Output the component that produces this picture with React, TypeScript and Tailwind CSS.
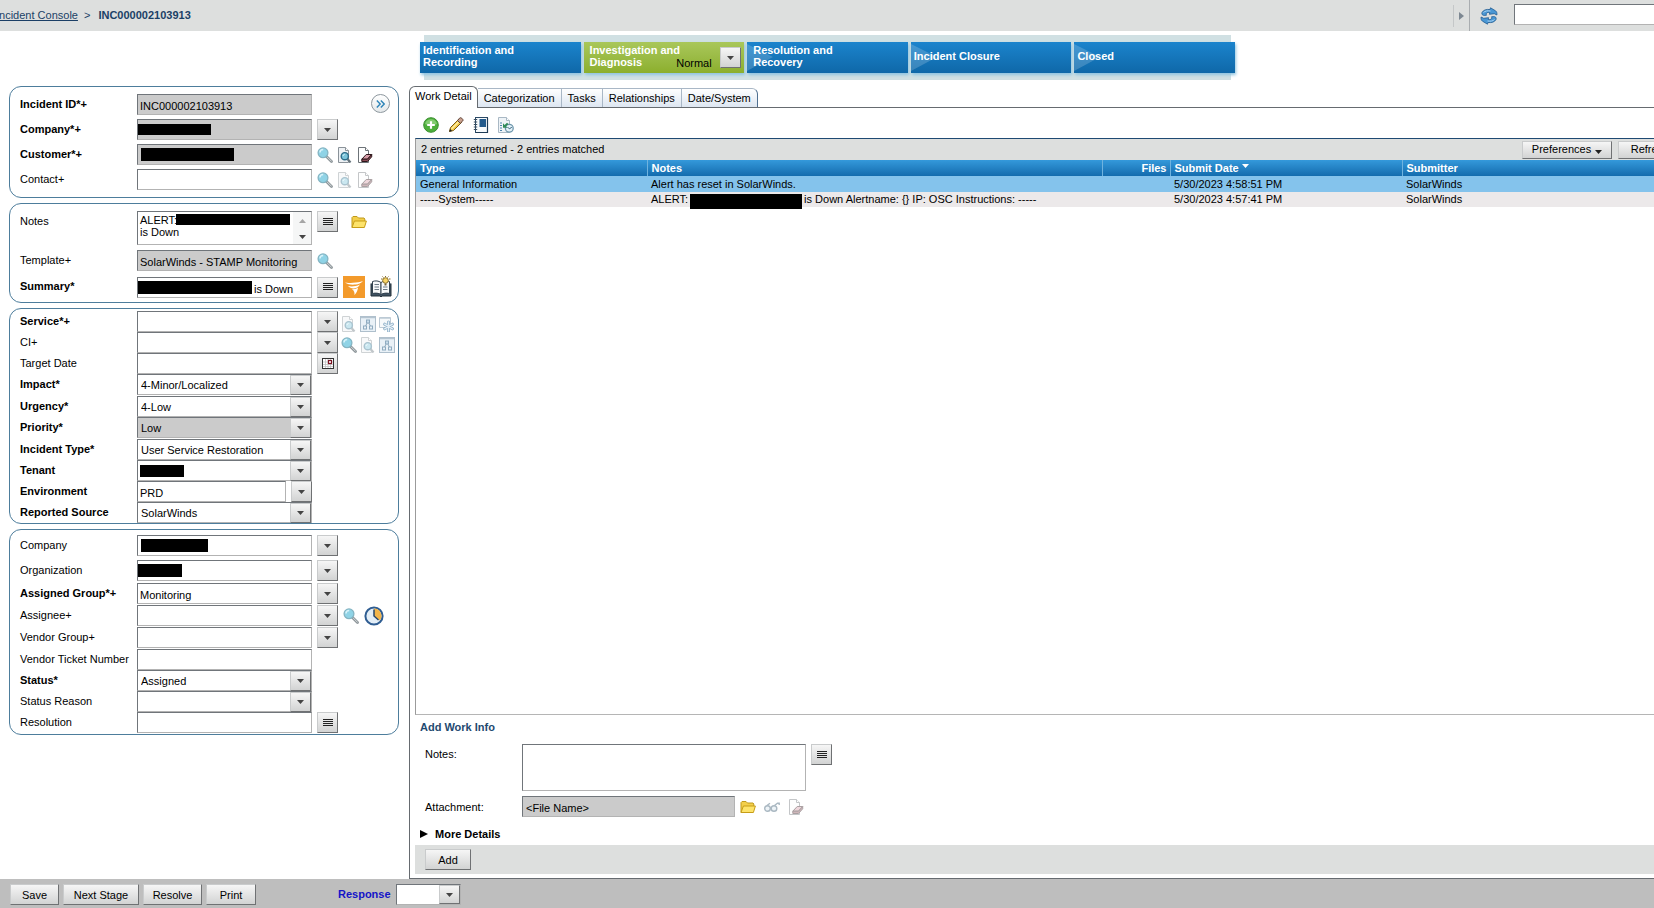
import { useId, type ReactNode } from 'react';

const raised =
  'border border-t-[#c9cbcc] border-l-[#c9cbcc] border-r-[#6f7173] border-b-[#6f7173] bg-gradient-to-b from-[#f6f6f6] to-[#d2d3d3]';
const sunken = 'border border-t-[#70757a] border-l-[#70757a] border-r-[#b3b3b3] border-b-[#b3b3b3]';

/* ---------- icons ---------- */

function Caret({ className = 'text-[#444]' }: { className?: string }) {
  return (
    <svg width="7" height="4" viewBox="0 0 8 5" preserveAspectRatio="none" className={className} aria-hidden="true">
      <path d="M0 0h8L4 5z" fill="currentColor" />
    </svg>
  );
}

function Magnifier() {
  return (
    <svg width="16" height="16" viewBox="0 0 16 16" aria-hidden="true">
      <path d="M9.5 9.5l5 5" stroke="#8d9599" strokeWidth="2.8" strokeLinecap="round" />
      <path d="M10 9.8l4.4 4.4" stroke="#d5dadc" strokeWidth="1" strokeLinecap="round" />
      <circle cx="6" cy="5.8" r="4.9" fill="#8fd3e6" stroke="#84b4c2" strokeWidth="1.3" />
      <path d="M3 5.6c0-1.9 1.3-3 3.2-3" stroke="#d8f3fa" strokeWidth="1.5" fill="none" />
    </svg>
  );
}

function DocSearch({ faded = false }: { faded?: boolean }) {
  return (
    <svg width="16" height="16" viewBox="0 0 16 16" className={faded ? 'opacity-40' : ''} aria-hidden="true">
      <path d="M1.5.5h7l3 3v12h-10z" fill="#eef1f4" stroke="#8a9299" />
      <path d="M8.500.5v3h3" fill="#fff" stroke="#8a9299" />
      <path d="M10.500 12l3 3.500" stroke="#66747c" strokeWidth="2.200" />
      <circle cx="7.800" cy="9.200" r="3.600" fill="#7cc4da" stroke="#2c6c89" strokeWidth="1.400" />
      <path d="M6 9c.1-1 .7-1.600 1.700-1.700" stroke="#d8f3fa" fill="none" />
    </svg>
  );
}

function DocErase({ faded = false }: { faded?: boolean }) {
  return (
    <svg width="16" height="16" viewBox="0 0 16 16" className={faded ? 'opacity-40' : ''} aria-hidden="true">
      <path d="M1.500.5h7l3 3v12h-10z" fill="#fdfdfd" stroke="#6d7378" />
      <path d="M8.500.5v3h3" fill="#fff" stroke="#6d7378" />
      <path d="M4.800 12.200l4.400-4.700h5.500l-4.200 4.700z" fill="#d59aa6" stroke="#2d1519" strokeLinejoin="round" />
      <path d="M4.800 12.200v2.300h5.700l4.200-4.700V7.500l-4.200 4.700z" fill="#8b4a55" stroke="#2d1519" strokeLinejoin="round" />
    </svg>
  );
}

function Folder() {
  return (
    <svg width="16" height="14" viewBox="0 0 16 14" aria-hidden="true">
      <path d="M1 12.500V2.500l1-1h4l1.500 1.500h5.500l.8 1v2" fill="#f3cf4b" stroke="#c09a1c" strokeLinejoin="round" />
      <path d="M1 12.500l2.400-6.500h12l-2 6.500z" fill="#fde36b" stroke="#c79d17" strokeLinejoin="round" />
    </svg>
  );
}

function Hierarchy() {
  return (
    <svg width="16" height="16" viewBox="0 0 16 16" aria-hidden="true">
      <rect x=".5" y=".5" width="15" height="15" fill="#e9f1f7" stroke="#aebfcc" />
      <path d="M1 1.500h14" stroke="#b4c4d0" strokeWidth="1.500" />
      <path d="M7.500 6.500L5.500 10v1M8.500 6.500l2 3.500v1" stroke="#8fabc0" fill="none" />
      <rect x="6.500" y="4" width="3" height="3" fill="#c8dcea" stroke="#8fabc0" />
      <rect x="3.500" y="10" width="3" height="3" fill="#e9f1f7" stroke="#8fabc0" />
      <rect x="9.500" y="10" width="3" height="3" fill="#e9f1f7" stroke="#8fabc0" />
    </svg>
  );
}

function Impact() {
  return (
    <svg width="16" height="16" viewBox="0 0 16 16" aria-hidden="true">
      <path d="M.5 1.500h11v10H.5z" fill="#f6f9fb" stroke="#bccad5" />
      <path d="M1 2h10" stroke="#bccad5" strokeWidth="1.500" />
      <g stroke="#8fb0c8" strokeWidth="3" strokeLinecap="round">
        <path d="M9.500 6v9M5.700 8.200l7.700 4.600M5.700 12.800l7.700-4.600" />
      </g>
      <g stroke="#e4eff7" strokeWidth="1.400" strokeLinecap="round">
        <path d="M9.500 6v9M5.700 8.200l7.700 4.600M5.700 12.800l7.700-4.600" />
      </g>
    </svg>
  );
}

function SolarFlare() {
  return (
    <svg width="22" height="22" viewBox="0 0 22 22" aria-hidden="true">
      <rect width="22" height="22" fill="#f39a2b" />
      <path d="M2 6.500c3 .8 5 .3 8 .2 4 0 7-.8 10-1.700-2 2.200-4.500 3.500-7.500 3.600-4 .2-7.500.2-10.500-2.100z" fill="#fff" />
      <path d="M5 10c3 .8 7 .8 12-1.500-1.500 2.600-3.800 3.800-6 3.900-2.600.1-4.500-.8-6-2.400z" fill="#fff" />
      <path d="M9 13c2 .4 4 .1 6-1.200-.3 2.800-1.600 5.400-3.600 7.200.5-2.500-.4-4.500-2.400-6z" fill="#fff" />
    </svg>
  );
}

function Book() {
  return (
    <svg width="22" height="22" viewBox="0 0 22 22" aria-hidden="true">
      <path d="M1 7.500v12.500h9l1 1 1-1h9V7.500" fill="#3f5263" stroke="#23303b" />
      <path d="M2.500 5.500c3-1 6-.8 8.500 1v12c-2.500-1.500-5.500-1.700-8.500-1z" fill="#f7f9fa" stroke="#33424f" />
      <path d="M19.500 5.500c-3-1-6-.8-8.500 1v12c2.500-1.500 5.500-1.700 8.500-1z" fill="#f7f9fa" stroke="#33424f" />
      <path d="M4.500 8.500h4.500M4.500 11h4.500M4.500 13.500h4.500M13 11h4.500M13 13.500h4.500" stroke="#6d7b86" />
      <path d="M11 3h1.500M19 3h1.500M12.500.5l1 1M18.500.5l-1 1M15.500 0v1" stroke="#8a6f28" />
      <circle cx="15.500" cy="4.500" r="2.800" fill="#f8d465" stroke="#8a6f28" />
      <path d="M14.500 7.500h2v2h-2z" fill="#77633a" />
    </svg>
  );
}

function Clock() {
  return (
    <svg width="20" height="20" viewBox="0 0 20 20" aria-hidden="true">
      <circle cx="10" cy="10" r="8.600" fill="#e3eef7" stroke="#2f5d92" strokeWidth="2" />
      <path d="M10 10V2.600a7.400 7.400 0 0 1 5.800 12z" fill="#f3b54a" />
      <path d="M10 3.500V10l4.500 4" stroke="#27466b" strokeWidth="1.500" fill="none" />
    </svg>
  );
}

function CalendarIcon() {
  return (
    <svg width="12" height="11" viewBox="0 0 12 11" aria-hidden="true">
      <rect x=".5" y=".5" width="11" height="10" fill="#fff" stroke="#333" />
      <path d="M1 4h10M1 6.500h10M1 8.500h10M3.500 1v9M6 1v9M8.500 1v9" stroke="#b9b9b9" strokeWidth=".7" />
      <rect x="6.500" y="2.500" width="3" height="3" fill="#fff" stroke="#7c1020" strokeWidth="1.200" />
    </svg>
  );
}

function Lines() {
  return (
    <svg width="10" height="8" viewBox="0 0 10 8" aria-hidden="true">
      <path d="M0 .5h10M0 2.500h10M0 4.500h10M0 6.500h10" stroke="#222" />
    </svg>
  );
}

function AddIcon() {
  return (
    <svg width="16" height="16" viewBox="0 0 16 16" aria-hidden="true">
      <circle cx="8" cy="8" r="7.300" fill="#4cae3a" stroke="#3a8f2f" />
      <path d="M2 7a6.200 6.200 0 0 1 12 0c-3 1.500-9 1.500-12 0z" fill="#82cc70" />
      <path d="M8 4.200v7.600M4.200 8h7.600" stroke="#fff" strokeWidth="2.200" />
    </svg>
  );
}

function Pencil() {
  return (
    <svg width="16" height="16" viewBox="0 0 16 16" aria-hidden="true">
      <path d="M1.500 14.500l1-4 8-8 3 3-8 8z" fill="#f4c948" stroke="#7a5a14" strokeLinejoin="round" />
      <path d="M3.500 12l7.500-7.500" stroke="#fff0a8" strokeWidth="1.200" />
      <path d="M9.500 3.500l2-2.300c.8-.8 1.500-.6 2.300.1l.7.700c.7.800.7 1.500 0 2.200l-2.200 2.100z" fill="#c9a08e" stroke="#5f4337" />
      <path d="M1.200 14.800l.9-2.900 2 2z" fill="#222" />
    </svg>
  );
}

function Notebook() {
  return (
    <svg width="16" height="16" viewBox="0 0 16 16" aria-hidden="true">
      <rect x="2.500" y=".5" width="12" height="15" fill="#f7fafc" stroke="#2b4a66" />
      <path d="M14.500 1v14.500H3" stroke="#1f3b55" fill="none" strokeWidth="1.200" />
      <rect x="6.500" y="2" width="6.500" height="8" fill="#235a8c" />
      <path d="M.8 2.500h3.400M.8 5h3.400M.8 7.500h3.400M.8 10h3.400M.8 12.500h3.400" stroke="#3a4e60" strokeWidth="1.200" />
    </svg>
  );
}

function Report() {
  return (
    <svg width="16" height="16" viewBox="0 0 16 16" aria-hidden="true">
      <path d="M.5.5h8l3 3v12H.5z" fill="#eef3f7" stroke="#a9b8c4" />
      <path d="M8.500.5v3h3" fill="#fff" stroke="#a9b8c4" />
      <path d="M2 6h2M2 8.500h2M2 11h2M2 13.500h2" stroke="#4c83ab" strokeWidth="1.200" />
      <circle cx="11.300" cy="11.300" r="3.900" fill="#e4f1f8" stroke="#6c95ab" strokeWidth="1.300" />
      <path d="M9.500 10l1.800 1.800 2.500-1.500" stroke="#35617c" fill="none" />
      <path d="M5 6.200v4.600h4.600L8 9.300 10.500 7 9 5.700 6.600 7.900z" fill="#2f8a58" />
    </svg>
  );
}

function Glasses() {
  return (
    <svg width="16" height="16" viewBox="0 0 16 16" aria-hidden="true">
      <g fill="#edf3f7" stroke="#aab8c2" strokeWidth="1.400">
        <circle cx="3.500" cy="9.500" r="2.800" />
        <circle cx="10" cy="9.500" r="2.800" />
        <path d="M3 6.500l3-2.300M10.500 6.500l3-2.300h1.700v1.800M6.200 9h1.200" fill="none" />
      </g>
    </svg>
  );
}

function RefreshIcon() {
  return (
    <svg width="18" height="18" viewBox="0 0 18 18" aria-hidden="true">
      <g fill="#4a97d4" stroke="#1f5a91" strokeWidth=".8" strokeLinejoin="round">
        <path d="M2 5.500C3.500 2.800 6.500 2 10 2.600L10.500.800 15.500 3.800c1.300 1 1.600 2.200 1.400 4.200l-2.600-1.300-4.900.6.400-1.800C7.500 5 5.500 6.200 6.500 8.200 3.500 9 1.200 8 2 5.500z" />
        <path d="M16 12.500c-1.500 2.700-4.500 3.500-8 2.900l-.5 1.800-5-3C1.200 13.200.900 12 1.100 10l2.600 1.300 4.900-.6-.4 1.800c2.300.5 4.300-.7 3.300-2.700 3-.8 5.300.2 4.500 2.700z" />
      </g>
      <path d="M3.500 5.500C5 3.900 7.500 3.600 10.500 4M14.500 12.500c-1.500 1.600-4 1.900-7 1.500" stroke="#a9d3f2" fill="none" />
    </svg>
  );
}

/* ---------- form parts ---------- */

function ToolButton({ label, children }: { label: string; children: ReactNode }) {
  return (
    <button type="button" aria-label={label} className={`flex h-[21px] w-[21px] shrink-0 items-center justify-center ${raised}`}>
      {children}
    </button>
  );
}

function IconButton({ label, children }: { label: string; children: ReactNode }) {
  return (
    <button type="button" aria-label={label} className="flex shrink-0 items-center justify-center">
      {children}
    </button>
  );
}

function MenuButton({ label }: { label: string }) {
  return (
    <ToolButton label={label}>
      <Caret />
    </ToolButton>
  );
}

function Row({ label, bold, id, tall, children }: { label: string; bold?: boolean; id: string; tall?: boolean; children: ReactNode }) {
  return (
    <div className={`flex ${tall ? 'items-start' : 'items-center'}`}>
      <label htmlFor={id} className={`w-[117px] shrink-0 whitespace-nowrap leading-4 ${bold ? 'font-bold' : ''} ${tall ? 'pt-[2px]' : 'pb-[2px]'}`}>
        {label}
      </label>
      <div className="flex items-center gap-[5px]">{children}</div>
    </div>
  );
}

type FieldProps = {
  label: string;
  bold?: boolean;
  value?: string;
  readOnly?: boolean;
  mask?: ReactNode;
  width?: string;
  children?: ReactNode;
};

function TextRow({ label, bold, value = '', readOnly, mask, width = 'w-[175px]', children }: FieldProps) {
  const id = useId();
  return (
    <Row label={label} bold={bold} id={id}>
      <span className={`flex h-[21px] items-center ${width} ${sunken} ${readOnly ? 'bg-[#cbcbcb]' : 'bg-white'}`}>
        {mask}
        <input id={id} type="text" defaultValue={value} readOnly={readOnly} className="h-full w-full min-w-0 flex-1 bg-transparent pt-[3px] pl-[2px] outline-none" />
      </span>
      {children}
    </Row>
  );
}

function SelectRow({ label, bold, value = '', readOnly, mask }: FieldProps) {
  const id = useId();
  return (
    <Row label={label} bold={bold} id={id}>
      <span className={`flex h-[21px] w-[175px] items-center ${sunken} ${readOnly ? 'bg-[#cbcbcb]' : 'bg-white'}`}>
        {mask}
        <select id={id} className="h-full min-w-0 flex-1 appearance-none bg-transparent pt-[1px] pl-[3px] outline-none">
          <option>{value}</option>
        </select>
        <span className={`flex h-[20px] w-[21px] items-center justify-center ${raised}`}>
          <Caret />
        </span>
      </span>
    </Row>
  );
}

function Panel({ className, children }: { className: string; children: ReactNode }) {
  return <section className={`flex flex-col rounded-xl border border-[#4d7d9c] pl-[10px] ${className}`}>{children}</section>;
}

function ActionButton({ children, className }: { children: ReactNode; className: string }) {
  return (
    <button type="button" className={`flex h-[21px] items-center justify-center whitespace-nowrap pt-px ${raised} ${className}`}>
      {children}
    </button>
  );
}

/* ---------- left side ---------- */

function IncidentForm() {
  const notesId = useId();
  return (
    <div className="flex w-[409px] shrink-0 flex-col gap-[5px] pl-[9px] pr-[10px]">
      <Panel className="gap-1 py-[7px]">
        <div className="flex items-start justify-between pr-2">
          <TextRow label="Incident ID*+" bold value="INC000002103913" readOnly />
          <button
            type="button"
            aria-label="Expand"
            className="flex h-[19px] w-[19px] items-center justify-center rounded-full border border-[#8d979e] bg-gradient-to-b from-white to-[#e4e8ea]"
          >
            <svg width="9" height="8" viewBox="0 0 9 8" aria-hidden="true">
              <path d="M.8.500L4.200 4 .8 7.500M4.800.500L8.200 4 4.800 7.500" fill="none" stroke="#2d84b8" strokeWidth="1.400" />
            </svg>
          </button>
        </div>
        <TextRow label="Company*+" bold readOnly mask={<span className="h-[11px] w-[73px] bg-black" />}>
          <MenuButton label="Company menu" />
        </TextRow>
        <TextRow label="Customer*+" bold readOnly mask={<span className="ml-[3px] h-[13px] w-[93px] bg-black" />}>
          <span className="flex gap-1">
            <IconButton label="Search customer"><Magnifier /></IconButton>
            <IconButton label="View customer"><DocSearch /></IconButton>
            <IconButton label="Clear customer"><DocErase /></IconButton>
          </span>
        </TextRow>
        <TextRow label="Contact+">
          <span className="flex gap-1">
            <IconButton label="Search contact"><Magnifier /></IconButton>
            <IconButton label="View contact"><DocSearch faded /></IconButton>
            <IconButton label="Clear contact"><DocErase faded /></IconButton>
          </span>
        </TextRow>
      </Panel>

      <Panel className="gap-[5px] pt-[7px] pb-1">
        <Row label="Notes" id={notesId} tall>
          <div className={`relative flex h-[34px] w-[175px] bg-white ${sunken}`}>
            <textarea id={notesId} defaultValue={'ALERT:\nis Down'} className="min-w-0 flex-1 resize-none overflow-hidden pt-[2px] pl-[2px] leading-3 outline-none" />
            <span className="absolute top-[2px] left-[38px] h-[11px] w-[114px] bg-black" />
            <span className="flex w-[18px] flex-col items-center justify-between bg-[#f5f6f6] pt-[7px] pb-[5px]">
              <Caret className="rotate-180 text-[#a5a5a5]" />
              <Caret />
            </span>
          </div>
          <div className="flex items-center gap-[13px] self-start">
            <ToolButton label="Expand notes"><Lines /></ToolButton>
            <IconButton label="Open notes folder"><Folder /></IconButton>
          </div>
        </Row>
        <TextRow label="Template+" value="SolarWinds - STAMP Monitoring" readOnly>
          <IconButton label="Search template"><Magnifier /></IconButton>
        </TextRow>
        <TextRow label="Summary*" bold value="is Down" mask={<span className="h-[13px] w-[114px] bg-black" />}>
          <ToolButton label="Expand summary"><Lines /></ToolButton>
          <IconButton label="SolarWinds"><SolarFlare /></IconButton>
          <IconButton label="Knowledge search"><Book /></IconButton>
        </TextRow>
      </Panel>

      <Panel className="pt-[2px]">
        <div className="flex flex-col">
          <TextRow label="Service*+" bold>
            <MenuButton label="Service menu" />
            <span className="-ml-[2px] flex gap-[3px] pt-[5px]">
              <IconButton label="View service"><DocSearch faded /></IconButton>
              <IconButton label="Service hierarchy"><Hierarchy /></IconButton>
              <IconButton label="Service impact"><Impact /></IconButton>
            </span>
          </TextRow>
          <TextRow label="CI+">
            <MenuButton label="CI menu" />
            <span className="-ml-[2px] flex gap-[3px] pt-[5px]">
              <IconButton label="Search CI"><Magnifier /></IconButton>
              <IconButton label="View CI"><DocSearch faded /></IconButton>
              <IconButton label="CI hierarchy"><Hierarchy /></IconButton>
            </span>
          </TextRow>
          <TextRow label="Target Date">
            <ToolButton label="Pick date"><CalendarIcon /></ToolButton>
          </TextRow>
        </div>
        <div className="flex flex-col gap-px">
          <SelectRow label="Impact*" bold value="4-Minor/Localized" />
          <SelectRow label="Urgency*" bold value="4-Low" />
        </div>
        <div className="flex flex-col gap-px">
          <SelectRow label="Priority*" bold value="Low" readOnly />
          <SelectRow label="Incident Type*" bold value="User Service Restoration" />
        </div>
        <div className="flex flex-col">
          <SelectRow label="Tenant" bold mask={<span className="ml-[2px] h-3 w-[44px] bg-black" />} />
          <TextRow label="Environment" bold value="PRD" width="w-[149px]">
            <MenuButton label="Environment menu" />
          </TextRow>
          <SelectRow label="Reported Source" bold value="SolarWinds" />
        </div>
      </Panel>

      <Panel className="gap-[2px] pt-[5px] pb-px">
        <div className="flex flex-col gap-1">
          <TextRow label="Company" mask={<span className="ml-[3px] h-[13px] w-[67px] bg-black" />}>
            <MenuButton label="Assigned company menu" />
          </TextRow>
          <TextRow label="Organization" mask={<span className="h-[13px] w-[44px] bg-black" />}>
            <MenuButton label="Organization menu" />
          </TextRow>
        </div>
        <div className="flex flex-col">
          <div className="flex flex-col gap-px">
            <TextRow label="Assigned Group*+" bold value="Monitoring">
              <MenuButton label="Assigned group menu" />
            </TextRow>
            <TextRow label="Assignee+">
              <MenuButton label="Assignee menu" />
              <IconButton label="Search assignee"><Magnifier /></IconButton>
              <IconButton label="Assignee schedule"><Clock /></IconButton>
            </TextRow>
            <TextRow label="Vendor Group+">
              <MenuButton label="Vendor group menu" />
            </TextRow>
            <TextRow label="Vendor Ticket Number" />
          </div>
          <SelectRow label="Status*" bold value="Assigned" />
          <SelectRow label="Status Reason" />
          <TextRow label="Resolution">
            <ToolButton label="Expand resolution"><Lines /></ToolButton>
          </TextRow>
        </div>
      </Panel>
    </div>
  );
}

/* ---------- process flow ---------- */

const stages = [
  { name: 'Identification and Recording', current: false, arrow: false, short: false },
  { name: 'Investigation and Diagnosis', current: true, arrow: false, short: false },
  { name: 'Resolution and Recovery', current: false, arrow: true, short: false },
  { name: 'Incident Closure', current: false, arrow: true, short: true },
  { name: 'Closed', current: false, arrow: true, short: true },
];

function ProcessFlow() {
  return (
    <div className="pt-1 pb-[6px] pl-[424px]">
      <div className="w-[807px] bg-[#d0e0e3] py-[7px]">
        <ol className="-mx-1 grid grid-cols-5 gap-[3px]">
          {stages.map((stage) => (
            <li
              key={stage.name}
              className={`relative flex h-[31px] items-center justify-between font-bold leading-3 text-white shadow-[1px_2px_3px_#8fc4e0] ${
                stage.current ? 'bg-gradient-to-b from-[#a9c75a] to-[#8caf2c]' : 'bg-gradient-to-b from-[#1b84cd] to-[#0f68a8]'
              } ${(stage.arrow || stage.current) && !stage.short ? 'pl-[6px]' : 'pl-[3px]'}`}
            >
              {stage.arrow && (
                <svg width="26" height="29" viewBox="0 0 26 29" className="absolute top-px left-0" aria-hidden="true">
                  <path d="M0 1l26 13L0 28z" fill="#fff" fillOpacity=".18" />
                </svg>
              )}
              <span className={`relative ${stage.short ? 'pb-1' : 'w-[100px] pb-[3px]'}`}>{stage.name}</span>
              {stage.current && (
                <label className="absolute inset-y-[5px] right-[3px] flex items-center font-normal text-black">
                  <select aria-label="Stage action" className="h-[21px] w-[44px] appearance-none pt-[10px] outline-none">
                    <option>Normal</option>
                  </select>
                  <span className={`flex h-[21px] w-[21px] items-center justify-center ${raised}`}>
                    <Caret />
                  </span>
                </label>
              )}
            </li>
          ))}
        </ol>
      </div>
    </div>
  );
}

/* ---------- right side ---------- */

function Tabs() {
  return (
    <div className="flex items-end" role="tablist">
      <button type="button" role="tab" aria-selected="true" className="h-[22px] rounded-t-md border border-b-0 border-[#666b70] bg-white px-[5px] pb-[2px]">
        Work Detail
      </button>
      <div className="flex flex-1 border-b border-[#666b70]">
        {['Categorization', 'Tasks', 'Relationships', 'Date/System'].map((tab) => (
          <button
            key={tab}
            type="button"
            role="tab"
            aria-selected="false"
            className="h-[19px] border-t border-r border-[#a9b7c6] bg-gradient-to-b from-white to-[#dde6f1] px-[6px] last:rounded-tr-md last:border-r-[#4f6f90]"
          >
            {tab}
          </button>
        ))}
      </div>
    </div>
  );
}

function WorkTable() {
  return (
    <div className="ml-[5px] flex flex-1 flex-col border-t border-b border-l border-t-[#1f4a73] border-b-[#b5b5b5] border-l-[#9b9b9b]">
      <div className="flex h-[21px] items-center overflow-hidden bg-[#dddfde] pl-[5px]">
        <span>2 entries returned - 2 entries matched</span>
        <div className="-mr-[28px] ml-auto flex gap-[6px]">
          <button type="button" className={`flex h-[18px] w-[90px] items-center justify-center gap-1 ${raised}`}>
            Preferences
            <Caret className="mt-1 text-[#222]" />
          </button>
          <button type="button" className={`flex h-[18px] w-16 items-center justify-center ${raised}`}>
            Refresh
          </button>
        </div>
      </div>
      <table className="w-full table-fixed border-collapse text-left whitespace-nowrap">
        <colgroup>
          <col className="w-[231px]" />
          <col className="w-[455px]" />
          <col className="w-[68px]" />
          <col className="w-[232px]" />
          <col />
        </colgroup>
        <thead>
          <tr className="h-[16px] bg-gradient-to-b from-[#3499db] to-[#136cae] leading-[14px] text-white">
            <th className="border-r border-[#6fb3df] p-0 pb-px pl-1">Type</th>
            <th className="border-r border-[#6fb3df] p-0 pb-px pl-1">Notes</th>
            <th className="border-r border-[#6fb3df] p-0 pr-[3px] pb-px text-right">Files</th>
            <th className="border-r border-[#6fb3df] p-0 pb-px pl-1">
              <span className="flex gap-[3px]">
                Submit Date
                <Caret className="mt-[3px] text-white" />
              </span>
            </th>
            <th className="p-0 pb-px pl-1">Submitter</th>
          </tr>
        </thead>
        <tbody className="leading-[15px]">
          <tr className="h-[16px] bg-[#84c3ec]">
            <td className="p-0 pl-1">General Information</td>
            <td className="p-0 pl-1">Alert has reset in SolarWinds.</td>
            <td className="p-0" />
            <td className="p-0 pl-1">5/30/2023 4:58:51 PM</td>
            <td className="p-0 pl-1">SolarWinds</td>
          </tr>
          <tr className="h-[15px] bg-[#ece9ea]">
            <td className="p-0 pl-1">-----System-----</td>
            <td className="p-0 pl-1">
              <span className="flex h-[15px] items-start gap-[2px]">
                ALERT:
                <span className="mt-[2px] h-[15px] w-[112px] shrink-0 bg-black" />
                <span>is Down Alertname: {'{}'} IP: OSC Instructions: -----</span>
              </span>
            </td>
            <td className="p-0" />
            <td className="p-0 pl-1">5/30/2023 4:57:41 PM</td>
            <td className="p-0 pl-1">SolarWinds</td>
          </tr>
        </tbody>
      </table>
    </div>
  );
}

function AddWorkInfo() {
  return (
    <>
      <div className="flex flex-col pt-1 pl-[10px]">
        <h2 className="leading-4 font-bold text-[#1f4a70]">Add Work Info</h2>
        <div className="mt-[9px] flex items-start gap-[5px] pl-[5px]">
          <label htmlFor="work-notes" className="w-[92px] pt-[2px] leading-4">Notes:</label>
          <textarea id="work-notes" className={`h-[47px] w-[284px] resize-none bg-white outline-none ${sunken}`} />
          <ToolButton label="Expand work notes"><Lines /></ToolButton>
        </div>
        <div className="mt-[5px] flex items-center gap-[5px] pl-[5px]">
          <label htmlFor="work-file" className="w-[92px] leading-4">Attachment:</label>
          <input id="work-file" type="text" readOnly defaultValue="<File Name>" className={`h-[21px] w-[213px] bg-[#cbcbcb] pt-[3px] pl-[3px] outline-none ${sunken}`} />
          <span className="flex items-center gap-2">
            <IconButton label="Add attachment"><Folder /></IconButton>
            <IconButton label="View attachment"><Glasses /></IconButton>
            <IconButton label="Delete attachment"><DocErase faded /></IconButton>
          </span>
        </div>
        <button type="button" className="mt-[9px] mb-[3px] flex items-center gap-[7px] leading-4 font-bold">
          <svg width="8" height="8" viewBox="0 0 8 8" aria-hidden="true">
            <path d="M0 0l8 4-8 4z" />
          </svg>
          More Details
        </button>
      </div>
      <div className="mb-1 ml-[5px] flex h-[29px] items-center bg-[#dddfde] pl-[10px]">
        <ActionButton className="w-[46px]">Add</ActionButton>
      </div>
    </>
  );
}

export default function App() {
  return (
    <div className="flex min-h-screen flex-col overflow-hidden bg-white font-['Liberation_Sans',Arial,sans-serif] text-[11px] text-black">
      <header className="flex h-[31px] items-center justify-between overflow-hidden bg-[#dddfde] text-[#1b3f66]">
        <nav className="-ml-1 flex items-center gap-[6px] whitespace-nowrap" aria-label="Breadcrumb">
          <a href="#console" className="underline">Incident Console</a>
          <span>&gt;</span>
          <span className="pl-[2px] font-bold">INC000002103913</span>
        </nav>
        <div className="flex h-full items-center">
          <span className="flex h-[22px] w-4 items-center justify-center border-l border-[#c4c7c8]">
            <svg width="5" height="8" viewBox="0 0 5 8" aria-hidden="true">
              <path d="M0 0l5 4-5 4z" fill="#7d8892" />
            </svg>
          </span>
          <span className="flex h-full items-center border-l border-[#a9adb0] pl-[10px]">
            <IconButton label="Refresh page"><RefreshIcon /></IconButton>
          </span>
          <input type="search" aria-label="Search" className={`mb-[2px] ml-4 h-[21px] w-[140px] border-r-0 bg-white outline-none ${sunken}`} />
        </div>
      </header>

      <ProcessFlow />

      <main className="flex flex-1">
        <IncidentForm />
        <div className="flex min-w-0 flex-1 flex-col">
          <Tabs />
          <section className="flex flex-1 flex-col border-b border-l border-[#666b70]">
            <div className="flex h-[30px] items-center gap-[9px] pt-[3px] pl-[13px]">
              <IconButton label="Create"><AddIcon /></IconButton>
              <IconButton label="Edit"><Pencil /></IconButton>
              <IconButton label="View log"><Notebook /></IconButton>
              <IconButton label="Report"><Report /></IconButton>
            </div>
            <WorkTable />
            <AddWorkInfo />
          </section>
        </div>
      </main>

      <footer className="flex h-[29px] items-center gap-1 bg-[#bebebe] pt-[2px] pl-[10px]">
        <ActionButton className="w-[49px]">Save</ActionButton>
        <ActionButton className="w-[76px]">Next Stage</ActionButton>
        <ActionButton className="w-[59px]">Resolve</ActionButton>
        <ActionButton className="w-[50px]">Print</ActionButton>
        <label className="flex items-center gap-[5px] pl-[78px] font-bold text-[#1414c8]">
          Response
          <span className={`flex h-[21px] w-[65px] bg-white ${sunken}`}>
            <select className="min-w-0 flex-1 appearance-none outline-none">
              <option></option>
            </select>
            <span className={`flex w-[21px] items-center justify-center ${raised}`}>
              <Caret />
            </span>
          </span>
        </label>
      </footer>
    </div>
  );
}
